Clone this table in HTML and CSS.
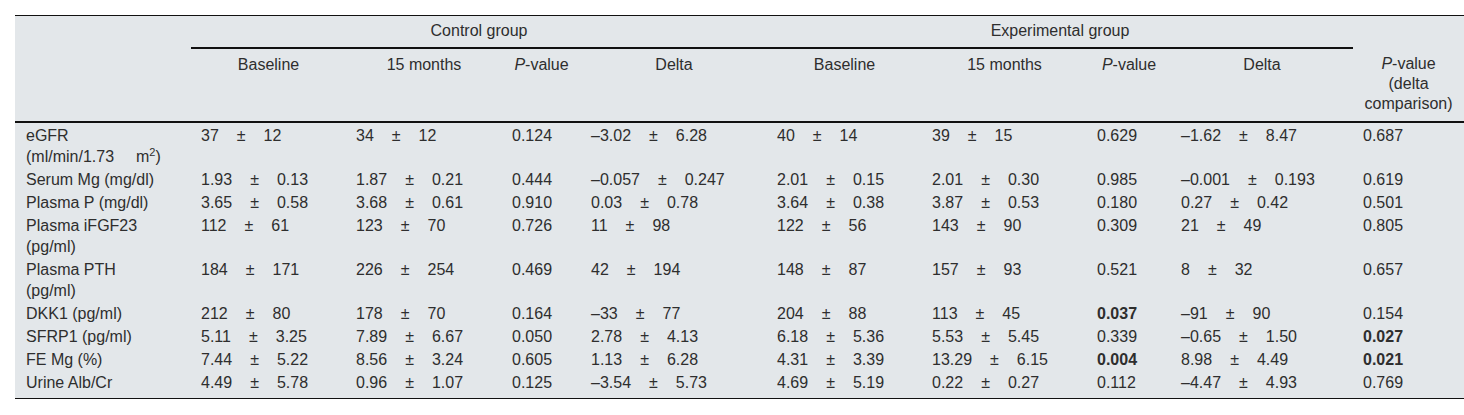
FILE: index.html
```html
<!DOCTYPE html>
<html lang="en">
<head>
<meta charset="utf-8">
<title>Table</title>
<link rel="stylesheet" href="styles.css">
</head>
<body>
<table class="data">
  <colgroup>
    <col class="c0"><col class="c1"><col class="c2"><col class="c3"><col class="c4">
    <col class="c5"><col class="c6"><col class="c7"><col class="c8"><col class="c9">
  </colgroup>
  <thead>
    <tr class="group-row">
      <th class="blank"></th>
      <th class="group" colspan="4">Control group</th>
      <th class="group" colspan="4">Experimental group</th>
      <th class="blank"></th>
    </tr>
    <tr class="sub-row">
      <th class="blank"></th>
      <th>Baseline</th>
      <th>15 months</th>
      <th><i>P</i>-value</th>
      <th>Delta</th>
      <th>Baseline</th>
      <th>15 months</th>
      <th><i>P</i>-value</th>
      <th>Delta</th>
      <th><i>P</i>-value<br>(delta<br>comparison)</th>
    </tr>
  </thead>
  <tbody>
    <tr>
      <td>eGFR<br>(ml/min/1.73<span class="gap"></span>m<sup>2</sup>)</td>
      <td>37<span class="pm">±</span>12</td>
      <td>34<span class="pm">±</span>12</td>
      <td>0.124</td>
      <td>–3.02<span class="pm">±</span>6.28</td>
      <td>40<span class="pm">±</span>14</td>
      <td>39<span class="pm">±</span>15</td>
      <td>0.629</td>
      <td>–1.62<span class="pm">±</span>8.47</td>
      <td>0.687</td>
    </tr>
    <tr>
      <td>Serum Mg (mg/dl)</td>
      <td>1.93<span class="pm">±</span>0.13</td>
      <td>1.87<span class="pm">±</span>0.21</td>
      <td>0.444</td>
      <td>–0.057<span class="pm">±</span>0.247</td>
      <td>2.01<span class="pm">±</span>0.15</td>
      <td>2.01<span class="pm">±</span>0.30</td>
      <td>0.985</td>
      <td>–0.001<span class="pm">±</span>0.193</td>
      <td>0.619</td>
    </tr>
    <tr>
      <td>Plasma P (mg/dl)</td>
      <td>3.65<span class="pm">±</span>0.58</td>
      <td>3.68<span class="pm">±</span>0.61</td>
      <td>0.910</td>
      <td>0.03<span class="pm">±</span>0.78</td>
      <td>3.64<span class="pm">±</span>0.38</td>
      <td>3.87<span class="pm">±</span>0.53</td>
      <td>0.180</td>
      <td>0.27<span class="pm">±</span>0.42</td>
      <td>0.501</td>
    </tr>
    <tr>
      <td>Plasma iFGF23<br>(pg/ml)</td>
      <td>112<span class="pm">±</span>61</td>
      <td>123<span class="pm">±</span>70</td>
      <td>0.726</td>
      <td>11<span class="pm">±</span>98</td>
      <td>122<span class="pm">±</span>56</td>
      <td>143<span class="pm">±</span>90</td>
      <td>0.309</td>
      <td>21<span class="pm">±</span>49</td>
      <td>0.805</td>
    </tr>
    <tr>
      <td>Plasma PTH<br>(pg/ml)</td>
      <td>184<span class="pm">±</span>171</td>
      <td>226<span class="pm">±</span>254</td>
      <td>0.469</td>
      <td>42<span class="pm">±</span>194</td>
      <td>148<span class="pm">±</span>87</td>
      <td>157<span class="pm">±</span>93</td>
      <td>0.521</td>
      <td>8<span class="pm">±</span>32</td>
      <td>0.657</td>
    </tr>
    <tr>
      <td>DKK1 (pg/ml)</td>
      <td>212<span class="pm">±</span>80</td>
      <td>178<span class="pm">±</span>70</td>
      <td>0.164</td>
      <td>–33<span class="pm">±</span>77</td>
      <td>204<span class="pm">±</span>88</td>
      <td>113<span class="pm">±</span>45</td>
      <td><b>0.037</b></td>
      <td>–91<span class="pm">±</span>90</td>
      <td>0.154</td>
    </tr>
    <tr>
      <td>SFRP1 (pg/ml)</td>
      <td>5.11<span class="pm">±</span>3.25</td>
      <td>7.89<span class="pm">±</span>6.67</td>
      <td>0.050</td>
      <td>2.78<span class="pm">±</span>4.13</td>
      <td>6.18<span class="pm">±</span>5.36</td>
      <td>5.53<span class="pm">±</span>5.45</td>
      <td>0.339</td>
      <td>–0.65<span class="pm">±</span>1.50</td>
      <td><b>0.027</b></td>
    </tr>
    <tr>
      <td>FE Mg (%)</td>
      <td>7.44<span class="pm">±</span>5.22</td>
      <td>8.56<span class="pm">±</span>3.24</td>
      <td>0.605</td>
      <td>1.13<span class="pm">±</span>6.28</td>
      <td>4.31<span class="pm">±</span>3.39</td>
      <td>13.29<span class="pm">±</span>6.15</td>
      <td><b>0.004</b></td>
      <td>8.98<span class="pm">±</span>4.49</td>
      <td><b>0.021</b></td>
    </tr>
    <tr class="last">
      <td>Urine Alb/Cr</td>
      <td>4.49<span class="pm">±</span>5.78</td>
      <td>0.96<span class="pm">±</span>1.07</td>
      <td>0.125</td>
      <td>–3.54<span class="pm">±</span>5.73</td>
      <td>4.69<span class="pm">±</span>5.19</td>
      <td>0.22<span class="pm">±</span>0.27</td>
      <td>0.112</td>
      <td>–4.47<span class="pm">±</span>4.93</td>
      <td>0.769</td>
    </tr>
  </tbody>
</table>
</body>
</html>
```
FILE: styles.css
```css
html, body {
  margin: 0;
  padding: 0;
  background: #ffffff;
}

body {
  padding: 15px 0 0 15px;
  font-family: "Liberation Sans", Arial, Helvetica, sans-serif;
  font-size: 16px;
  color: #2e2e2e;
}

.data {
  border-collapse: collapse;
  table-layout: fixed;
  width: 1449px;
  background: #e3e7ea;
  border-top: 1px solid #111;
  border-bottom: 1px solid #111;
}

.c0 { width: 176px; }
.c1 { width: 155px; }
.c2 { width: 156px; }
.c3 { width: 79px; }
.c4 { width: 186px; }
.c5 { width: 155px; }
.c6 { width: 165px; }
.c7 { width: 84px; }
.c8 { width: 182px; }
.c9 { width: 111px; }

.data th {
  font-weight: normal;
  text-align: center;
  vertical-align: top;
  line-height: 20px;
  padding: 5px 4px 6px;
  white-space: nowrap;
}

.group-row .group {
  border-bottom: 2px solid #111;
}

.sub-row th {
  padding: 6px 4px 7px;
  border-bottom: 2px solid #111;
}

.data td {
  text-align: left;
  vertical-align: top;
  line-height: 21px;
  padding: 2px 4px 0 10px;
  white-space: nowrap;
}

.data td:first-child {
  padding-left: 11px;
}

.data tr.last td {
  padding-bottom: 5px;
}

.pm {
  margin: 0 18px;
}

.gap {
  display: inline-block;
  width: 22px;
}

sup {
  font-size: 11px;
  line-height: 0;
  vertical-align: 6px;
}

b {
  font-weight: bold;
}
```
